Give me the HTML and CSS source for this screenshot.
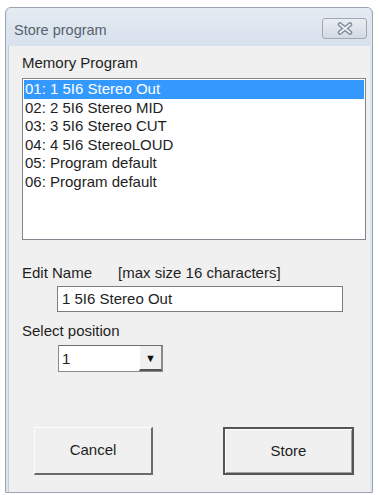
FILE: index.html
```html
<!DOCTYPE html>
<html lang="en">
<head>
	<meta charset="UTF-8">
	<title>Store program</title>
	<link rel="stylesheet" href="styles.css">
</head>
<body>
	<div class="window">
		<div class="titlebar">
			<span class="title">Store program</span>
			<span class="close">
				<svg width="20" height="13" viewBox="0 0 20 13">
					<path d="M5 2.5 L15 10.5 M15 2.5 L5 10.5" stroke="#7d8896" stroke-width="4.5" stroke-linecap="round"/>
					<path d="M5 2.5 L15 10.5 M15 2.5 L5 10.5" stroke="#eef1f5" stroke-width="1.8" stroke-linecap="round"/>
				</svg>
			</span>
		</div>
		<div class="client">
			<div class="label first">Memory Program</div>
			<ul class="list">
				<li class="sel">01: 1 5I6 Stereo Out</li>
				<li>02: 2 5I6 Stereo MID</li>
				<li>03: 3 5I6 Stereo CUT</li>
				<li>04: 4 5I6 StereoLOUD</li>
				<li>05: Program default</li>
				<li>06: Program default</li>
			</ul>
			<div class="label editrow">
				<span>Edit Name</span>
				<span class="hint">[max size 16 characters]</span>
			</div>
			<div class="edit">1 5I6 Stereo Out</div>
			<div class="label posrow">Select position</div>
			<div class="combo">
				<span class="val">1</span>
				<span class="drop">&#9660;</span>
			</div>
			<div class="buttons">
				<div class="btn cancel">Cancel</div>
				<div class="btn store">Store</div>
			</div>
		</div>
	</div>
</body>
</html>
```

FILE: styles.css
```css
body {
	margin: 0;
	background: #fff;
	font-family: "Liberation Sans", Arial, sans-serif;
}
ul {
	list-style: none;
	padding: 0;
	margin: 0;
}
.window {
	margin: 7px 0 0 5px;
	width: 368px;
	height: 486px;
	border: 1px solid #9aa3ae;
	border-radius: 6px 6px 0 0;
	background: #dde6ef;
	padding: 0 2px 0 2px;
	box-sizing: border-box;
	display: flex;
	flex-direction: column;
	overflow: hidden;
}
.titlebar {
	height: 38px;
	display: flex;
	align-items: center;
	justify-content: space-between;
	padding: 0 3px 0 6px;
	background: linear-gradient(#e4ebf3, #d7e1ec);
	flex-shrink: 0;
}
.title {
	font-size: 14.5px;
	color: #56616d;
	margin-top: 5px;
}
.close {
	width: 43px;
	height: 19px;
	border: 1px solid #9fa9b6;
	border-radius: 3px;
	background: linear-gradient(#eaeef3, #d3dae3);
	display: flex;
	align-items: center;
	justify-content: center;
	margin-top: 2px;
}
.client {
	flex: 1;
	background: #f0f0f0;
	border-left: 1px solid #c8cdd3;
	padding: 0 0 0 13px;
	font-size: 15px;
	color: #1e1e1e;
}
.label {
	height: 18px;
	line-height: 18px;
}
.first {
	margin-top: 8px;
}
.list {
	margin-top: 6px;
	width: 344px;
	height: 162px;
	box-sizing: border-box;
	border: 1px solid #7f858c;
	background: #fff;
	padding: 1px;
}
.list li {
	height: 18.5px;
	line-height: 18.5px;
	padding-left: 1px;
	white-space: nowrap;
}
.list .sel {
	background: #3399ff;
	color: #fff;
}
.editrow {
	margin-top: 24px;
	display: flex;
}
.hint {
	margin-left: 26px;
}
.edit {
	margin: 4px 0 0 35px;
	width: 286px;
	height: 26px;
	box-sizing: border-box;
	border: 1px solid #7d7d7d;
	background: #fff;
	line-height: 24px;
	padding-left: 4px;
}
.posrow {
	margin-top: 10px;
}
.combo {
	margin: 5px 0 0 36px;
	width: 105px;
	height: 27px;
	box-sizing: border-box;
	border: 1px solid #8a8a8a;
	border-top-color: #6e6e6e;
	background: #fff;
	display: flex;
	align-items: stretch;
}
.combo .val {
	flex: 1;
	line-height: 25px;
	padding-left: 3px;
}
.combo .drop {
	width: 23px;
	background: #f0f0f0;
	border-left: 1px solid #fff;
	border-bottom: 2px solid #555;
	border-right: 1px solid #888;
	box-sizing: border-box;
	font-size: 11px;
	line-height: 25px;
	text-align: center;
	color: #111;
}
.buttons {
	margin-top: 55px;
	display: flex;
}
.btn {
	height: 48px;
	box-sizing: border-box;
	line-height: 44px;
	text-align: center;
	background: #f0f0f0;
	font-size: 15px;
}
.cancel {
	margin-left: 12px;
	width: 119px;
	border: 1px solid #d6d6d6;
	border-right: 2px solid #6a6a6a;
	border-bottom: 2px solid #6a6a6a;
	border-top-color: #fcfcfc;
	border-left-color: #fcfcfc;
}
.store {
	margin-left: 70px;
	width: 131px;
	border: 2px solid #555;
	box-shadow: inset 1px 1px 0 #fff, inset -1px -1px 0 #a0a0a0;
}
```
